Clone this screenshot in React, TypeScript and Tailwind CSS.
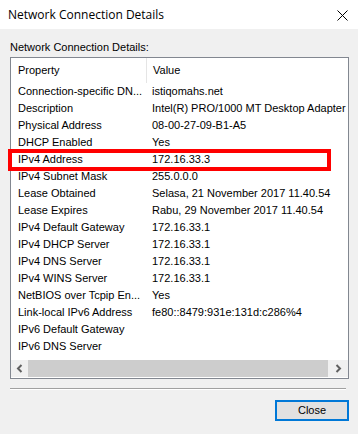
const rows: [string, string][] = [
  ['Connection-specific DN...', 'istiqomahs.net'],
  ['Description', 'Intel(R) PRO/1000 MT Desktop Adapter'],
  ['Physical Address', '08-00-27-09-B1-A5'],
  ['DHCP Enabled', 'Yes'],
  ['IPv4 Address', '172.16.33.3'],
  ['IPv4 Subnet Mask', '255.0.0.0'],
  ['Lease Obtained', 'Selasa, 21 November 2017 11.40.54'],
  ['Lease Expires', 'Rabu, 29 November 2017 11.40.54'],
  ['IPv4 Default Gateway', '172.16.33.1'],
  ['IPv4 DHCP Server', '172.16.33.1'],
  ['IPv4 DNS Server', '172.16.33.1'],
  ['IPv4 WINS Server', '172.16.33.1'],
  ['NetBIOS over Tcpip En...', 'Yes'],
  ['Link-local IPv6 Address', 'fe80::8479:931e:131d:c286%4'],
  ['IPv6 Default Gateway', ''],
  ['IPv6 DNS Server', ''],
]

export default function App() {
  return (
    <div className="w-[358px] h-[434px] bg-[#f0f0f0] flex flex-col font-['Liberation_Sans',Arial,sans-serif] text-[11px] text-black">
      <div className="h-[29px] bg-white flex items-center justify-between pl-2 pr-[10px]">
        <span className="font-['Open_Sans',sans-serif] text-[12px]">Network Connection Details</span>
        <svg width="11" height="11" viewBox="0 0 11 11" className="mt-[1px]">
          <path d="M0.5 0.5 L10.5 10.5 M10.5 0.5 L0.5 10.5" stroke="#000" strokeWidth="1" />
        </svg>
      </div>

      <div className="flex flex-col pl-[10px] pr-[9px]">
        <div className="mt-[12px] leading-[13px]">Network Connection Details:</div>

        <div className="relative mt-[3px] h-[322px] border border-[#828790] bg-white flex flex-col">
          <div className="flex-1">
            <div className="h-[25px] flex items-center">
              <div className="w-[135px] pl-[7px]">Property</div>
              <div className="w-px h-full bg-[#e5e5e5]" />
              <div className="pl-[6px]">Value</div>
            </div>
            {rows.map(([k, v]) => (
              <div key={k} className="h-[17px] flex items-center whitespace-nowrap">
                <div className="w-[136px] pl-[7px]">{k}</div>
                <div className="pl-[5px]">{v}</div>
              </div>
            ))}
          </div>
          <div className="h-[17px] flex items-center bg-[#f0f0f0] mb-[1px]">
            <div className="w-[17px] flex justify-center">
              <svg width="7" height="9" viewBox="0 0 7 9">
                <path d="M5.5 1 L2 4.5 L5.5 8" stroke="#606060" strokeWidth="2" fill="none" />
              </svg>
            </div>
            <div className="flex-1 h-full bg-[#cdcdcd]" />
            <div className="w-[20px] flex justify-center">
              <svg width="7" height="9" viewBox="0 0 7 9">
                <path d="M1.5 1 L5 4.5 L1.5 8" stroke="#606060" strokeWidth="2" fill="none" />
              </svg>
            </div>
          </div>

          <div className="absolute left-[-3px] top-[91px] w-[323px] h-[22px] border-4 border-[#ff0000]" />
        </div>

        <div className="mt-[9px] w-[336px] h-[2px] border-t border-[#a0a0a0] border-b border-b-white" />

        <div className="mt-[10px] flex justify-end">
          <button className="w-[74px] h-[21px] border-2 border-[#0078d7] bg-[#e1e1e1] flex items-center justify-center">
            Close
          </button>
        </div>
      </div>
    </div>
  )
}
